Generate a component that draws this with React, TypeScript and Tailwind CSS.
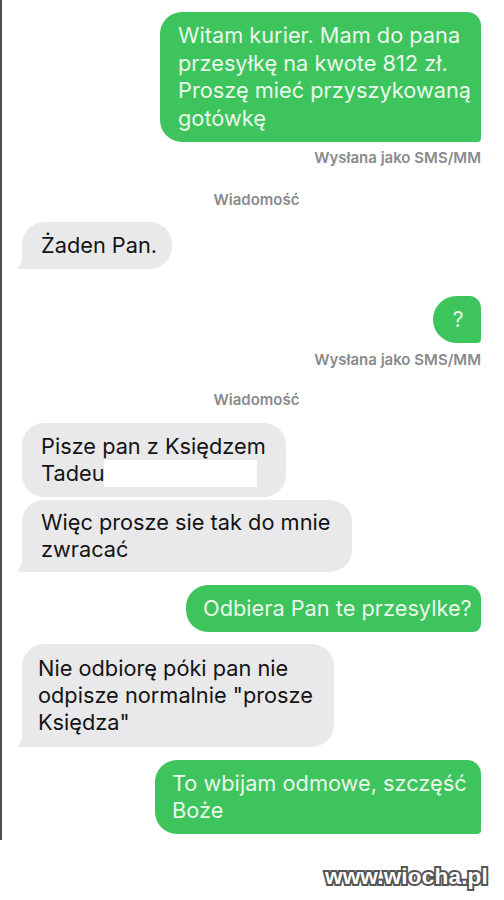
import React from "react";

const Tail = () => (
  <svg
    width="26"
    height="22"
    viewBox="0 0 26 22"
    className="absolute -left-[5px] bottom-0"
  >
    <path d="M5 0 H26 V22 H9 C6 22 2.5 22 0 21.5 C3 19.5 5 15 5 9 Z" fill="#e9e9eb" />
  </svg>
);

const Label = ({ children, className }: { children: React.ReactNode; className: string }) => (
  <div className={`text-[15px] leading-[18px] font-semibold text-[#8a8a8e] whitespace-nowrap ${className}`}>
    {children}
  </div>
);

export default function App() {
  return (
    <div className="w-[504px] h-[900px] bg-white font-['Inter',_'Liberation_Sans',_sans-serif] overflow-hidden">
      <div className="h-[840px] border-l-2 border-[#4d4d4d] pl-[20px] pr-[23px] pt-[12px] flex flex-col">
        {/* B1 */}
        <div className="self-end w-[321px] bg-[#3ec45c] text-[#eaf7ec] rounded-l-[22px] rounded-tr-[14px] rounded-br-[4px] pl-[18px] py-[10px] text-[21.75px] leading-[27.5px] whitespace-nowrap">
          Witam kurier. Mam do pana
          <br />
          przesyłkę na kwote 812 zł.
          <br />
          Proszę mieć przyszykowaną
          <br />
          gotówkę
        </div>
        <Label className="self-end mt-[7px]">Wysłana jako SMS/MM</Label>
        <Label className="self-center mt-[24px] pl-[10px]">Wiadomość</Label>

        {/* B2 */}
        <div className="relative self-start mt-[13px] w-[150px] bg-[#e9e9eb] text-[#141414] rounded-[22px] pl-[19px] py-[10px] text-[21.75px] leading-[27px] whitespace-nowrap">
          <Tail />
          <span className="relative">Żaden Pan.</span>
        </div>

        {/* B3 */}
        <div className="self-end mt-[27px] w-[48px] h-[47px] bg-[#3ec45c] text-[#eaf7ec] rounded-l-[24px] rounded-tr-[12px] rounded-br-[4px] flex items-center justify-center text-[21px] pl-[2px]">
          ?
        </div>
        <Label className="self-end mt-[8px]">Wysłana jako SMS/MM</Label>
        <Label className="self-center mt-[22px] pl-[10px]">Wiadomość</Label>

        {/* B4 */}
        <div className="self-start mt-[14px] w-[264px] bg-[#e9e9eb] text-[#141414] rounded-[22px] pl-[19px] py-[10px] text-[21.75px] leading-[27px] whitespace-nowrap">
          Pisze pan z Księdzem
          <br />
          <span className="flex items-center">
            Tadeu
            <span className="inline-block w-[153px] h-[27px] bg-white -ml-[1px]" />
          </span>
        </div>

        {/* B5 */}
        <div className="relative self-start mt-[3px] w-[330px] bg-[#e9e9eb] text-[#141414] rounded-[22px] pl-[19px] py-[9px] text-[21.75px] leading-[27px] whitespace-nowrap">
          <Tail />
          <div className="relative">
            Więc prosze sie tak do mnie
            <br />
            zwracać
          </div>
        </div>

        {/* B6 */}
        <div className="self-end mt-[13px] w-[295px] bg-[#3ec45c] text-[#eaf7ec] rounded-l-[22px] rounded-tr-[14px] rounded-br-[8px] pl-[17px] py-[10px] text-[21.75px] leading-[27px] whitespace-nowrap">
          Odbiera Pan te przesylke?
        </div>

        {/* B7 */}
        <div className="relative self-start mt-[12px] w-[312px] bg-[#e9e9eb] text-[#141414] rounded-[22px] pl-[16px] py-[11px] text-[21.75px] leading-[27px] whitespace-nowrap">
          <Tail />
          <div className="relative">
            Nie odbiorę póki pan nie
            <br />
            odpisze normalnie "prosze
            <br />
            Księdza"
          </div>
        </div>

        {/* B8 */}
        <div className="self-end mt-[13px] w-[326px] bg-[#3ec45c] text-[#eaf7ec] rounded-l-[22px] rounded-tr-[14px] rounded-br-[4px] pl-[17px] py-[10px] text-[21.75px] leading-[27px] whitespace-nowrap">
          To wbijam odmowe, szczęść
          <br />
          Boże
        </div>
      </div>

      <div className="flex justify-end pr-[16px] mt-[22px]">
        <div className="font-['Liberation_Sans',_sans-serif] font-bold text-[22.5px] leading-[30px] text-white [-webkit-text-stroke:4px_#555555] [paint-order:stroke_fill] tracking-[0.2px]">
          www.wiocha.pl
        </div>
      </div>
    </div>
  );
}
